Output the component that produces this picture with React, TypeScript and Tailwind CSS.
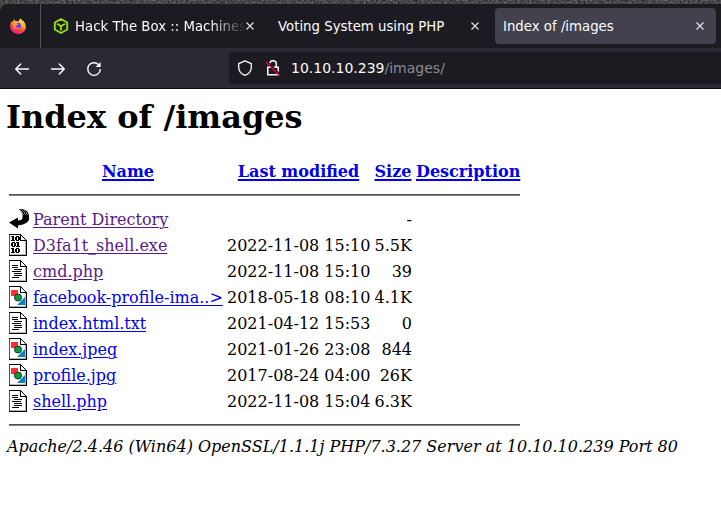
import React from "react";

type Kind = "back" | "binary" | "text" | "image";

const rows: { kind: Kind; name: string; date: string; size: string; visited?: boolean }[] = [
  { kind: "back", name: "Parent Directory", date: "", size: "-", visited: true },
  { kind: "binary", name: "D3fa1t_shell.exe", date: "2022-11-08 15:10", size: "5.5K", visited: true },
  { kind: "text", name: "cmd.php", date: "2022-11-08 15:10", size: "39", visited: true },
  { kind: "image", name: "facebook-profile-ima..>", date: "2018-05-18 08:10", size: "4.1K" },
  { kind: "text", name: "index.html.txt", date: "2021-04-12 15:53", size: "0" },
  { kind: "image", name: "index.jpeg", date: "2021-01-26 23:08", size: "844" },
  { kind: "image", name: "profile.jpg", date: "2017-08-24 04:00", size: "26K" },
  { kind: "text", name: "shell.php", date: "2022-11-08 15:04", size: "6.3K" },
];

const bitRows = [2, 8, 14];

function FileIcon({ kind }: { kind: Kind }) {
  if (kind === "back") {
    return (
      <svg width="21" height="22" viewBox="0 0 21 22" className="block">
        <path d="M11 1h4l4 2 2 4v5l-2 2.500-4 2-5 1v3L1 14.500 10 9.500v3l3-.5 1.500-1.500V6L13 3.500z" fill="#000" />
        <path d="M11 1.500h6M12 2.500h6M13 3.500h6M14 4.500h5M14 5.500h6M15 6.500h5" stroke="#777" strokeWidth="1" strokeDasharray="1 1" />
      </svg>
    );
  }
  return (
    <svg width="20" height="22" viewBox="0 0 20 22" shapeRendering="crispEdges" className="block">
      <path d="M1 0h12v1h1v1h1v1h1v1h1v1h1v1h1v16H1z" fill="#000" />
      <path d="M2 1h10v6h5v13H2z" fill="#fff" />
      <path d="M13 2h1v1h1v1h1v1h1v1h-4z" fill="#fff" />
      <path d="M17 7h1v14H2v-1h15z" fill="#b5b5b5" />
      <path d="M1 1h1v20H1z" fill="#555" />
      {kind === "text" && (
        <path d="M4 5.500h6M4 7.500h6M6 9.500h8M4 11.500h9M6 13.500h8M6 15.500h8M4 17.500h7" stroke="#000" strokeWidth="1" />
      )}
      {kind === "binary" &&
        bitRows.map((y, i) => (
          <g key={y} transform={`translate(0 ${y})`}>
            <path transform={i === 1 ? "translate(5 0)" : undefined} d="M3 0h3v4h1v1H3V4h1V1H3z" fill="#000" />
            <path
              transform={i === 1 ? "translate(-4 0)" : undefined}
              d="M8 0h3v1h1v3h-1v1H8V4H7V1h1zM9 1v3h1V1z"
              fill="#000"
              fillRule="evenodd"
            />
          </g>
        ))}
      {kind === "image" && (
        <g shapeRendering="auto">
          <path d="M3 4h7v6H3z" fill="#ff3030" />
          <path d="M17 11v8H9z" fill="#0782bd" />
          <circle cx="10" cy="11.500" r="3.500" fill="#079b3c" stroke="#173422" strokeWidth="1" />
        </g>
      )}
    </svg>
  );
}

function Close() {
  return (
    <svg width="8" height="8" viewBox="0 0 8 8" className="block shrink-0">
      <path d="M.5.5l7 7M7.500.5l-7 7" stroke="#e5e5ea" strokeWidth="1.100" />
    </svg>
  );
}

function Firefox() {
  return (
    <svg width="16" height="16" viewBox="0 0 16 16" className="block">
      <defs>
        <linearGradient id="flame" x1=".8" y1="0" x2=".3" y2="1">
          <stop offset="0" stopColor="#fff44f" />
          <stop offset=".35" stopColor="#ffb52e" />
          <stop offset=".65" stopColor="#ff4840" />
          <stop offset="1" stopColor="#ed168a" />
        </linearGradient>
      </defs>
      <path d="M1.500 3.200 2.900 4 4 1.200 5.500 3l3 .2L10.500.2c1 1.800 3 2.500 4 4.200 2 3 1.600 6.500-.2 8.800-2.500 3.400-8.200 3.800-11.500.9C-.4 11.300-.5 6.500 1.500 3.200z" fill="url(#flame)" />
      <circle cx="8.200" cy="7.600" r="2.900" fill="#7147e8" />
      <path d="M3 5.500c2-1.700 4-.6 5 .7L6.800 7.500 5 8c.6 2 2.700 2.600 4.600 1.700C7.500 12 3.500 11 3 8z" fill="#ff9d28" />
    </svg>
  );
}

function TabBar() {
  return (
    <div className="flex h-11 rounded-tl-lg bg-[#1c1b22]">
      <div className="flex w-[41px] shrink-0 items-center border-r border-[#56555c] pl-[10px]">
        <Firefox />
      </div>
      <div className="flex w-[229px] shrink-0 items-center pl-3">
        <svg width="16" height="16" viewBox="0 0 16 16" fill="none" stroke="#93e00b" strokeWidth="1.900" strokeLinejoin="round" className="block shrink-0">
          <path d="M8 1l6.200 3.500v7L8 15l-6.200-3.500v-7zM4 5.800 8 8.200 12 5.800M8 8.200V12.500" />
        </svg>
        <span className="-mr-[7px] ml-[6px] w-[178px] shrink-0 whitespace-nowrap pt-[2px] [mask-image:linear-gradient(to_right,#000_135px,transparent_171px)]">
          Hack The Box :: Machines
        </span>
        <Close />
      </div>
      <div className="flex w-[225px] shrink-0 items-center pl-2">
        <span className="w-[193px] whitespace-nowrap pt-[2px]">Voting System using PHP</span>
        <Close />
      </div>
      <div className="my-1 flex w-[221px] shrink-0 items-center rounded bg-[#42414d] pl-2">
        <span className="w-[193px] whitespace-nowrap pt-[2px]">Index of /images</span>
        <Close />
      </div>
    </div>
  );
}

function Toolbar() {
  return (
    <div className="flex h-[41px] items-start border-b border-[#0c0c0d] bg-[#2b2a33] pt-1">
      <div className="flex h-8 w-[229px] shrink-0 items-center gap-5 pl-[14px] pt-[2px]">
        <svg width="16" height="16" viewBox="0 0 16 16" fill="none" stroke="#fbfbfe" strokeWidth="1.400" strokeLinecap="round" strokeLinejoin="round">
          <path d="M14.500 8H1.700M6.700 3l-5 5 5 5" />
        </svg>
        <svg width="16" height="16" viewBox="0 0 16 16" fill="none" stroke="#fbfbfe" strokeWidth="1.400" strokeLinecap="round" strokeLinejoin="round">
          <path d="M1.500 8h12.800M9.300 3l5 5-5 5" />
        </svg>
        <svg width="16" height="16" viewBox="0 0 16 16" fill="none" stroke="#fbfbfe" strokeWidth="1.400">
          <path d="M12.600 3.700A6.300 6.300 0 1 0 14.300 8" />
          <path d="M14.600 1v5h-5z" fill="#fbfbfe" stroke="none" />
        </svg>
      </div>
      <div className="flex h-8 flex-1 items-center rounded-l bg-[#1c1b22] pl-2">
        <svg width="16" height="16" viewBox="0 0 16 16" fill="none" stroke="#fbfbfe" strokeWidth="1.300" strokeLinejoin="round">
          <path d="M8 .8 14.300 3.700v3.500c0 3.700-2.200 6.500-6.300 8.200-4.100-1.700-6.300-4.500-6.300-8.200V3.700z" />
        </svg>
        <svg width="16" height="16" viewBox="0 0 16 16" fill="none" stroke="#fbfbfe" strokeWidth="1.500" className="ml-3">
          <path d="M4.700 7V4a3.300 3.300 0 0 1 6.600 0v3M2.800 7.200h10.400v7.500H2.800z" />
          <path d="M2.500 2 15 14.500" stroke="#1c1b22" strokeWidth="1.800" />
          <path d="M1 2 14.500 15.500" stroke="#e6003d" strokeWidth="1.400" />
        </svg>
        <span className="ml-[10px] text-[14px]">10.10.10.239<span className="text-[#8b8b91]">/images/</span></span>
      </div>
    </div>
  );
}

const columns = "grid grid-cols-[25px_190px_4px_143px_4px_38px_4px_104px]";

export default function App() {
  return (
    <div className="h-[507px] w-[721px] overflow-hidden bg-white">
      <div className="bg-[#424242] font-['DejaVu_Sans',sans-serif] text-[13.300px] text-[#fbfbfe]">
        <svg width="721" height="4" className="block">
          <filter id="stone" x="0" y="0" width="100%" height="100%" colorInterpolationFilters="sRGB">
            <feTurbulence type="fractalNoise" baseFrequency=".5" numOctaves="3" seed="4" />
            <feColorMatrix values=".5 0 0 0 .03 .5 0 0 0 .03 .5 0 0 0 .03 0 0 0 0 1" />
          </filter>
          <rect width="721" height="4" filter="url(#stone)" />
        </svg>
        <TabBar />
        <Toolbar />
      </div>
      <main className="pl-[6px] font-['DejaVu_Serif',serif] text-[16px] leading-[26px] text-black">
        <h1 className="pt-[9px] text-[32px] font-bold leading-[38px]">Index of /images</h1>
        <div className="ml-[2px] w-[512px] pt-[23px]">
          <div className={`${columns} whitespace-nowrap text-center font-bold text-[#0000ee] decoration-2 underline-offset-2`}>
            <a className="col-start-2 underline decoration-2 underline-offset-2">Name</a>
            <a className="col-start-4 underline decoration-2 underline-offset-2">Last modified</a>
            <a className="col-start-6 underline decoration-2 underline-offset-2">Size</a>
            <a className="col-start-8 underline decoration-2 underline-offset-2">Description</a>
          </div>
          <hr className="ml-px mt-[9px] h-[2px] border-0 border-t border-[#505050] bg-[#858585]" />
          <div className="pt-[11px]">
            {rows.map((row) => (
              <div key={row.name} className={`${columns} h-[26px] whitespace-nowrap`}>
                <span className="pt-px"><FileIcon kind={row.kind} /></span>
                <a className={row.visited ? "underline decoration-1 underline-offset-2 text-[#551a8b]" : "underline decoration-1 underline-offset-2 text-[#0000ee]"}>{row.name}</a>
                <span className="col-start-4 text-right">{row.date}</span>
                <span className="col-start-6 text-right">{row.size}</span>
              </div>
            ))}
          </div>
          <hr className="ml-px mt-[9px] h-[2px] border-0 border-t border-[#505050] bg-[#858585]" />
        </div>
        <address className="pl-px pt-[8px] italic">Apache/2.4.46 (Win64) OpenSSL/1.1.1j PHP/7.3.27 Server at 10.10.10.239 Port 80</address>
      </main>
    </div>
  );
}
